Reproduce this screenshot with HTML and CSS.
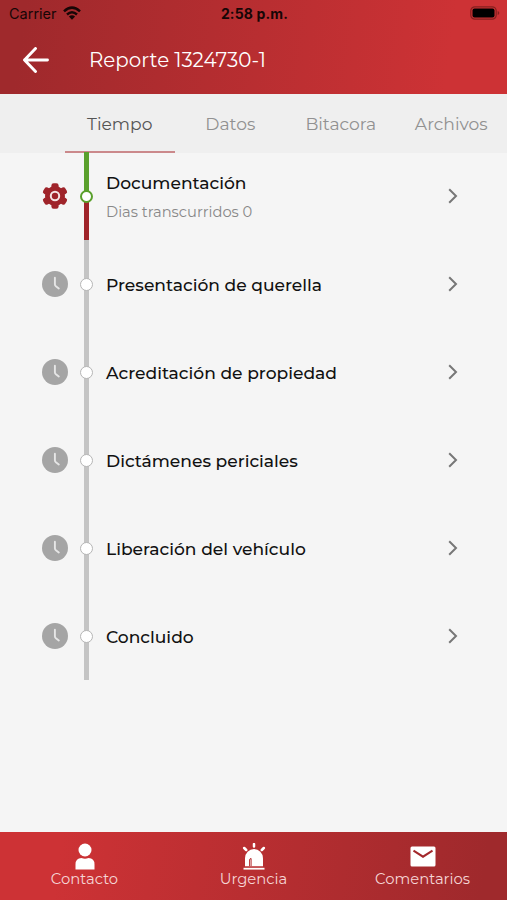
FILE: index.html
```html
<!DOCTYPE html>
<html lang="es">
<head>
<meta charset="utf-8">
<meta name="viewport" content="width=device-width, initial-scale=1">
<title>Reporte 1324730-1</title>
<link rel="stylesheet" href="styles.css">
</head>
<body>
<svg class="defs" aria-hidden="true">
  <symbol id="clock" viewBox="0 0 26 26"><circle cx="13" cy="13" r="13" fill="#a5a5a5"/><path d="M12.900 6.700v6.500q0 1.300 1 2.100l2.900 2.200" fill="none" stroke="#e6e6e6" stroke-width="1.900" stroke-linecap="round"/></symbol>
  <symbol id="chevron" viewBox="0 0 10 16"><path d="M1.200 1.200 8 8l-6.800 6.800" fill="none" stroke="#777" stroke-width="2"/></symbol>
</svg>
<div class="app">
  <header class="top">
    <div class="status">
      <div class="carrier"><span>Carrier</span>
        <svg class="wifi" viewBox="0 0 18 14"><g fill="none" stroke="#170606" stroke-width="2.500"><path d="M1 5.300q8-7.400 16 0"/><path d="M4 8.500q5-4.400 10 0"/></g><path d="M5.900 10.500q3.100-2.400 6.200 0L9 13.700z" fill="#170606"/></svg>
      </div>
      <span class="time">2:58 p.m.</span>
      <svg class="battery" viewBox="0 0 30 14"><rect x=".8" y=".8" width="25.400" height="12.400" rx="4" fill="none" stroke="#85201f" stroke-width="1.200"/><rect x="2.500" y="2.500" width="22" height="9" rx="2" fill="#000"/><path d="M27.700 5v4q1.600-.6 1.600-2t-1.600-2" fill="#85201f"/></svg>
    </div>
    <div class="titlebar">
      <svg class="back" viewBox="0 0 28 26"><path d="M25.500 13H2.500M13.500 1.500 2.500 13l11 11.500" fill="none" stroke="#fff" stroke-width="2.900" stroke-linecap="round" stroke-linejoin="round"/></svg>
      <h1>Reporte 1324730-1</h1>
    </div>
  </header>
  <nav class="tabs">
    <a class="tab active">Tiempo</a>
    <a class="tab">Datos</a>
    <a class="tab">Bitacora</a>
    <a class="tab">Archivos</a>
  </nav>
  <main class="steps">
    <div class="step current">
      <svg class="state" viewBox="0 0 26 26"><g fill="#9f242a"><circle cx="13" cy="13" r="10"/><rect x="9.400" y=".2" width="7.200" height="25.600" rx="2.200"/><rect x="9.400" y=".2" width="7.200" height="25.600" rx="2.200" transform="rotate(60 13 13)"/><rect x="9.400" y=".2" width="7.200" height="25.600" rx="2.200" transform="rotate(120 13 13)"/></g><circle cx="13" cy="13" r="4.200" fill="none" stroke="#f5e5e5" stroke-width="2"/></svg>
      <div class="rail"><i class="dot"></i></div>
      <div class="copy"><h2>Documentación</h2><p>Dias transcurridos 0</p></div>
      <svg class="chev"><use href="#chevron"/></svg>
    </div>
    <div class="step"><svg class="state"><use href="#clock"/></svg><div class="rail"><i class="dot"></i></div><div class="copy"><h2>Presentación de querella</h2></div><svg class="chev"><use href="#chevron"/></svg></div>
    <div class="step"><svg class="state"><use href="#clock"/></svg><div class="rail"><i class="dot"></i></div><div class="copy"><h2>Acreditación de propiedad</h2></div><svg class="chev"><use href="#chevron"/></svg></div>
    <div class="step"><svg class="state"><use href="#clock"/></svg><div class="rail"><i class="dot"></i></div><div class="copy"><h2>Dictámenes periciales</h2></div><svg class="chev"><use href="#chevron"/></svg></div>
    <div class="step"><svg class="state"><use href="#clock"/></svg><div class="rail"><i class="dot"></i></div><div class="copy"><h2>Liberación del vehículo</h2></div><svg class="chev"><use href="#chevron"/></svg></div>
    <div class="step"><svg class="state"><use href="#clock"/></svg><div class="rail"><i class="dot"></i></div><div class="copy"><h2>Concluido</h2></div><svg class="chev"><use href="#chevron"/></svg></div>
  </main>
  <footer class="bottom">
    <a class="action"><svg viewBox="0 0 28 28"><circle cx="14" cy="7" r="6.500" fill="#fff"/><path d="M4.500 26.500v-5q0-6.500 6-6.500 3.500 1.300 7 0 6 0 6 6.500v5z" fill="#fff"/></svg><span>Contacto</span></a>
    <a class="action"><svg viewBox="0 0 28 28"><path d="M5 23.200v-8a9 9.200 0 0 1 18 0v8z" fill="#fff"/><path d="M9.600 23.200V17q0-1.500 1.500-1.500V23.200" fill="none" stroke="#b52d30" stroke-width="1"/><path d="M3.500 25.700h21" stroke="#fff" stroke-width="1.800"/><path d="M14 1v2.500M4.200 5l2 2M23.800 5l-2 2" stroke="#fff" stroke-width="2.500" stroke-linecap="round"/></svg><span>Urgencia</span></a>
    <a class="action"><svg viewBox="0 0 28 28"><rect x="1.500" y="3.500" width="25" height="20" rx="1.500" fill="#fff"/><path d="m4.500 7.700 9.500 6 9.500-6" fill="none" stroke="#a3282b" stroke-width="2"/></svg><span>Comentarios</span></a>
  </footer>
</div>
</body>
</html>
```
FILE: styles.css
```css
* { box-sizing: border-box; }
body { margin: 0; font-family: Montserrat, Inter, sans-serif; }
h1, h2, p { margin: 0; font-weight: 400; white-space: nowrap; }
.defs { display: none; }
.app { width: 507px; height: 900px; display: flex; flex-direction: column; background: #f5f5f5; }
.top { height: 94px; background: linear-gradient(98deg, #9f292c 5%, #cd3235 88%); }
.status { height: 27px; padding: 0 7px 0 9px; display: grid; grid-template-columns: 1fr auto 1fr; align-items: center; color: #170606; font-family: Inter, sans-serif; }
.carrier { display: flex; align-items: center; gap: 6px; font-size: 14.500px; }
.wifi { width: 18px; height: 14px; margin-top: -2px; }
.time { font-size: 14px; font-weight: 700; letter-spacing: .15px; }
.battery { width: 30px; height: 14px; justify-self: end; margin-top: -1px; }
.titlebar { height: 66px; display: flex; align-items: center; padding-left: 22px; color: #fff; }
.back { width: 28px; height: 26px; margin-right: 39px; }
h1 { font-size: 19.850px; }
.tabs { height: 58.500px; padding-left: 64.500px; display: flex; background: #efefef; flex: none; }
.tab { width: 110.500px; flex: none; display: flex; align-items: center; justify-content: center; padding-top: 3px; font-size: 17.150px; color: #919191; border-bottom: 2px solid transparent; }
.tab.active { color: #555; border-color: #cb898b; }
.steps { flex: 1; margin-top: -.5px; }
.step { height: 88px; display: flex; align-items: center; padding: 0 49px 0 42px; }
.state { width: 26px; height: 26px; margin-right: 12px; }
.rail { width: 13px; height: 88px; display: flex; align-items: center; justify-content: center; background: linear-gradient(#c4c4c4, #c4c4c4) center / 5px 100% no-repeat; }
.dot { width: 13px; height: 13px; border-radius: 50%; background: #fff; border: 1.500px solid #b5b5b5; }
.current .rail { background-image: linear-gradient(#5aa02c 50%, #9f242a 50%); }
.current .dot { border: 2px solid #5aa02c; }
.copy { flex: 1; margin-left: 13px; }
h2 { font-size: 17.130px; line-height: 24px; font-weight: 500; color: #111; padding-top: 2px; }
.current .copy { margin-top: -2px; }
.copy p { font-size: 14.700px; line-height: 20px; color: #888; margin-top: 7px; }
.chev { width: 10px; height: 16px; }
.bottom { height: 68.500px; display: grid; grid-template-columns: repeat(3, 1fr); background: linear-gradient(98deg, #cd3235 12%, #9f292c 95%); }
.action { display: flex; flex-direction: column; align-items: center; padding-top: 11px; font-size: 14.800px; color: #f5d5d5; }
.action svg { width: 28px; height: 28px; }
.action span { line-height: 16px; }
```
